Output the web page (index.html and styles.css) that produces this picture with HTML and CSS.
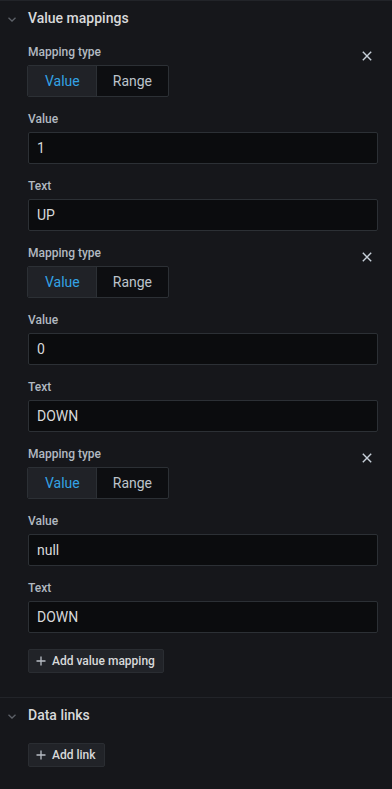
FILE: index.html
```html
<!DOCTYPE html>
<html>
<head>
<meta charset="utf-8">
<link rel="stylesheet" href="styles.css">
</head>
<body>
<div class="panel">
  <section class="section">
    <div class="section-header">
      <svg class="chevron" width="16" height="16" viewBox="0 0 16 16"><polyline points="4.5,6.8 8,10 11.5,6.8" fill="none" stroke="#5d6168" stroke-width="1.3"/></svg>
      <span class="section-title">Value mappings</span>
    </div>
    <div class="section-body">
      <div class="mapping">
        <div class="mapping-head">
          <span class="label">Mapping type</span>
          <span class="close"><svg width="16" height="16" viewBox="0 0 16 16"><path d="M3.8 3.8 L12.2 12.2 M12.2 3.8 L3.8 12.2" stroke="#c7d0d9" stroke-width="1.4"/></svg></span>
        </div>
        <div class="radio"><span class="seg active">Value</span><span class="seg">Range</span></div>
        <div class="field-gap"></div>
        <div class="label field-label">Value</div>
        <div class="input">1</div>
        <div class="field-gap"></div>
        <div class="label field-label">Text</div>
        <div class="input">UP</div>
        <div class="field-gap"></div>
      </div>
      <div class="mapping">
        <div class="mapping-head">
          <span class="label">Mapping type</span>
          <span class="close"><svg width="16" height="16" viewBox="0 0 16 16"><path d="M3.8 3.8 L12.2 12.2 M12.2 3.8 L3.8 12.2" stroke="#c7d0d9" stroke-width="1.4"/></svg></span>
        </div>
        <div class="radio"><span class="seg active">Value</span><span class="seg">Range</span></div>
        <div class="field-gap"></div>
        <div class="label field-label">Value</div>
        <div class="input">0</div>
        <div class="field-gap"></div>
        <div class="label field-label">Text</div>
        <div class="input">DOWN</div>
        <div class="field-gap"></div>
      </div>
      <div class="mapping">
        <div class="mapping-head">
          <span class="label">Mapping type</span>
          <span class="close"><svg width="16" height="16" viewBox="0 0 16 16"><path d="M3.8 3.8 L12.2 12.2 M12.2 3.8 L3.8 12.2" stroke="#c7d0d9" stroke-width="1.4"/></svg></span>
        </div>
        <div class="radio"><span class="seg active">Value</span><span class="seg">Range</span></div>
        <div class="field-gap"></div>
        <div class="label field-label">Value</div>
        <div class="input">null</div>
        <div class="field-gap"></div>
        <div class="label field-label">Text</div>
        <div class="input">DOWN</div>
        <div class="field-gap"></div>
      </div>
      <button class="btn btn-mapping"><svg width="10" height="10" viewBox="0 0 10 10"><path d="M5 0.5 V9.5 M0.5 5 H9.5" stroke="#b9bec5" stroke-width="1.3"/></svg><span>Add value mapping</span></button>
    </div>
  </section>
  <section class="section">
    <div class="section-header">
      <svg class="chevron" width="16" height="16" viewBox="0 0 16 16"><polyline points="4.5,6.8 8,10 11.5,6.8" fill="none" stroke="#5d6168" stroke-width="1.3"/></svg>
      <span class="section-title">Data links</span>
    </div>
    <div class="section-body links-body">
      <button class="btn"><svg width="10" height="10" viewBox="0 0 10 10"><path d="M5 0.5 V9.5 M0.5 5 H9.5" stroke="#b9bec5" stroke-width="1.3"/></svg><span>Add link</span></button>
    </div>
  </section>
</div>
</body>
</html>
```
FILE: styles.css
```css
html, body {
  margin: 0;
  padding: 0;
  background: #16171b;
}
body {
  font-family: Roboto, "Liberation Sans", sans-serif;
  color: #c7d0d9;
  width: 392px;
  height: 789px;
  overflow: hidden;
}
.panel {
  display: flex;
  flex-direction: column;
}
.section {
  border-top: 1px solid #222429;
}
.section-header {
  display: flex;
  align-items: center;
  gap: 8px;
  padding: 8px 0 8px 4px;
  height: 19px;
}
.chevron {
  display: block;
  flex: none;
}
.section-title {
  font-size: 14px;
  line-height: 19px;
  font-weight: 500;
  color: #d8d9da;
}
.section-body {
  padding: 8px 14px 24px 28px;
  display: flex;
  flex-direction: column;
}
.links-body {
  padding-top: 10px;
}
.mapping {
  display: flex;
  flex-direction: column;
}
.mapping-head {
  display: flex;
  justify-content: space-between;
  align-items: flex-start;
  height: 16px;
  margin-bottom: 5px;
}
.label {
  font-size: 12px;
  line-height: 16px;
  font-weight: 500;
  color: #b2b9c1;
}
.field-label {
  margin-bottom: 5px;
}
.close {
  display: block;
  width: 16px;
  height: 16px;
  margin-top: 4px;
  margin-bottom: -4px;
  margin-right: 3px;
}
.close svg {
  display: block;
}
.radio {
  display: flex;
  align-self: flex-start;
  height: 30px;
  border: 1px solid #2c3035;
  border-radius: 2px;
  margin-left: -1px;
  background: #0d0e11;
  overflow: hidden;
}
.seg {
  display: flex;
  align-items: center;
  font-size: 14px;
  padding: 0 16px;
  color: #bcc3cb;
}
.seg.active {
  background: #202227;
  color: #33a2e5;
  border-right: 1px solid #2c3035;
  padding: 0 16px 0 17px;
}
.field-gap {
  height: 14px;
}
.input {
  height: 30px;
  border: 1px solid #2c3035;
  border-radius: 2px;
  background: #0b0c0e;
  display: flex;
  align-items: center;
  padding-left: 8px;
  font-size: 14px;
  color: #d8d9da;
}
.btn {
  align-self: flex-start;
  display: flex;
  align-items: center;
  gap: 6px;
  height: 24px;
  box-sizing: border-box;
  padding: 0 8px 0 7px;
  background: #212328;
  border: 1px solid #2a2d32;
  border-radius: 2px;
  font-family: Roboto, "Liberation Sans", sans-serif;
  font-size: 12px;
  font-weight: 500;
  color: #d8d9da;
}
.btn svg {
  display: block;
}
.btn-mapping {
  margin-top: 2px;
}
```
